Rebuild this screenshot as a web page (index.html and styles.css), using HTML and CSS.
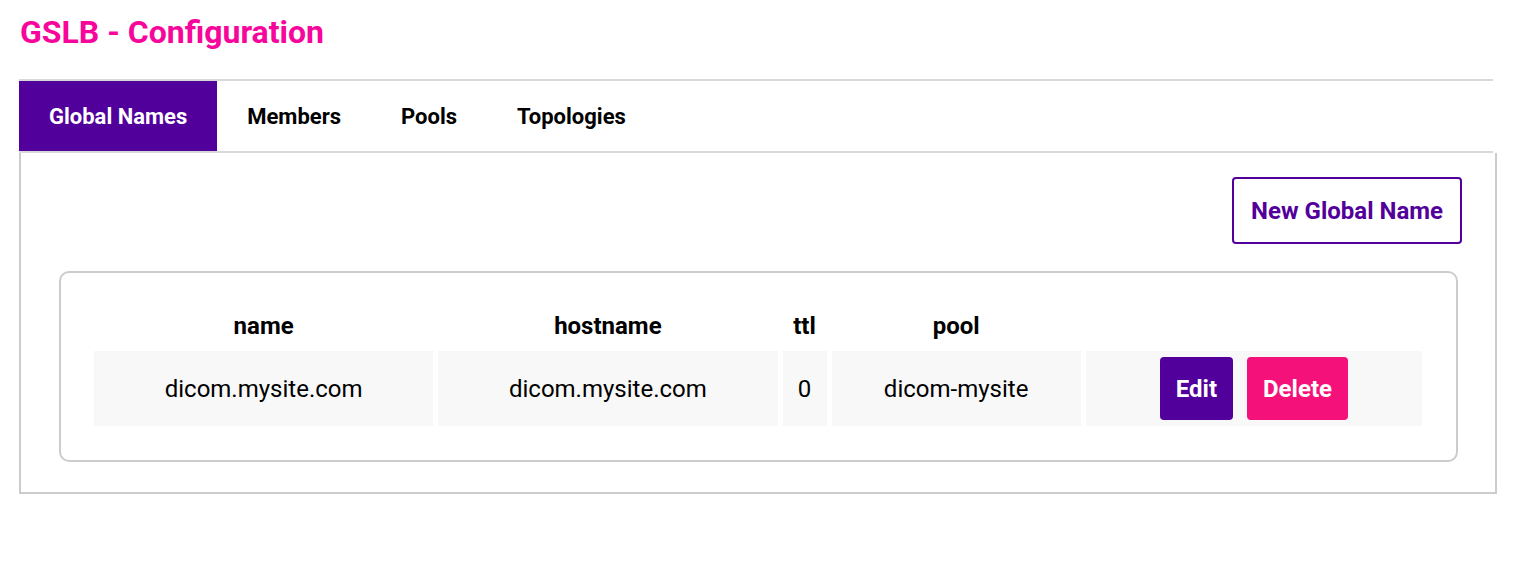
FILE: index.html
```html
<!DOCTYPE html>
<html>
<head>
<meta charset="utf-8">
<link rel="stylesheet" href="styles.css">
</head>
<body>
<div class="page">
  <h1 class="title">GSLB - Configuration</h1>
  <div class="tabs">
    <div class="tab active">Global Names</div>
    <div class="tab">Members</div>
    <div class="tab">Pools</div>
    <div class="tab">Topologies</div>
  </div>
  <div class="panel">
    <div class="toolbar">
      <button class="btn-outline">New Global Name</button>
    </div>
    <div class="card">
      <table class="grid">
        <colgroup>
          <col class="c-name"><col class="c-host"><col class="c-ttl"><col class="c-pool"><col class="c-act">
        </colgroup>
        <thead>
          <tr><th>name</th><th>hostname</th><th>ttl</th><th>pool</th><th></th></tr>
        </thead>
        <tbody>
          <tr>
            <td>dicom.mysite.com</td>
            <td>dicom.mysite.com</td>
            <td>0</td>
            <td>dicom-mysite</td>
            <td class="actions"><button class="btn btn-edit">Edit</button><button class="btn btn-delete">Delete</button></td>
          </tr>
        </tbody>
      </table>
    </div>
  </div>
</div>
</body>
</html>
```

FILE: styles.css
```css
* { box-sizing: border-box; }
html, body { margin: 0; padding: 0; background: #fff; }
body { font-family: Roboto, "Liberation Sans", Arial, sans-serif; color: #000; }
.page { padding: 0 0 0 19px; width: 1497px; }
.title {
  margin: 14px 0 29px 1px;
  font-size: 32px;
  line-height: 36px;
  font-weight: 700;
  color: #f7069c;
}
.tabs {
  display: flex;
  margin-right: 4px;
  border-top: 2px solid #d8dada;
  border-bottom: 2px solid #d8dada;
}
.tab {
  height: 70px;
  padding: 0 30px;
  display: flex;
  align-items: center;
  font-size: 22px;
  font-weight: 700;
  color: #000;
}
.tab.active { background: #52009b; color: #fff; }
.panel {
  border: 2px solid #cccccc;
  border-top: none;
  padding: 24px 33px 30px 38px;
}
.toolbar { display: flex; justify-content: flex-end; margin-bottom: 27px; }
.btn-outline {
  height: 67px;
  padding: 0 17px;
  border: 2px solid #52009b;
  border-radius: 4px;
  background: #fff;
  color: #52009b;
  font-family: Roboto, "Liberation Sans", Arial, sans-serif;
  font-size: 24px;
  font-weight: 700;
}
.card {
  margin-right: 4px;
  border: 2px solid #cccccc;
  border-radius: 10px;
  padding: 28px 29px 29px 28px;
}
.grid {
  width: 100%;
  table-layout: fixed;
  border-collapse: separate;
  border-spacing: 5px;
  font-size: 24px;
}
.c-name { width: 339px; }
.c-host { width: 339px; }
.c-ttl { width: 44px; }
.c-pool { width: 249px; }
.c-act { width: 336px; }
.grid th {
  height: 40px;
  padding: 0;
  font-weight: 700;
  color: #000;
  text-align: center;
}
.grid td {
  height: 75px;
  padding: 6px 0;
  background: #f8f8f8;
  text-align: center;
  color: #000;
}
.actions { white-space: nowrap; }
.btn {
  height: 63px;
  padding: 0 16px;
  border: none;
  border-radius: 4px;
  color: #fff;
  font-family: Roboto, "Liberation Sans", Arial, sans-serif;
  font-size: 24px;
  font-weight: 700;
  vertical-align: middle;
}
.btn-edit { background: #52009b; margin-right: 14px; }
.btn-delete { background: #f5117a; }
```
